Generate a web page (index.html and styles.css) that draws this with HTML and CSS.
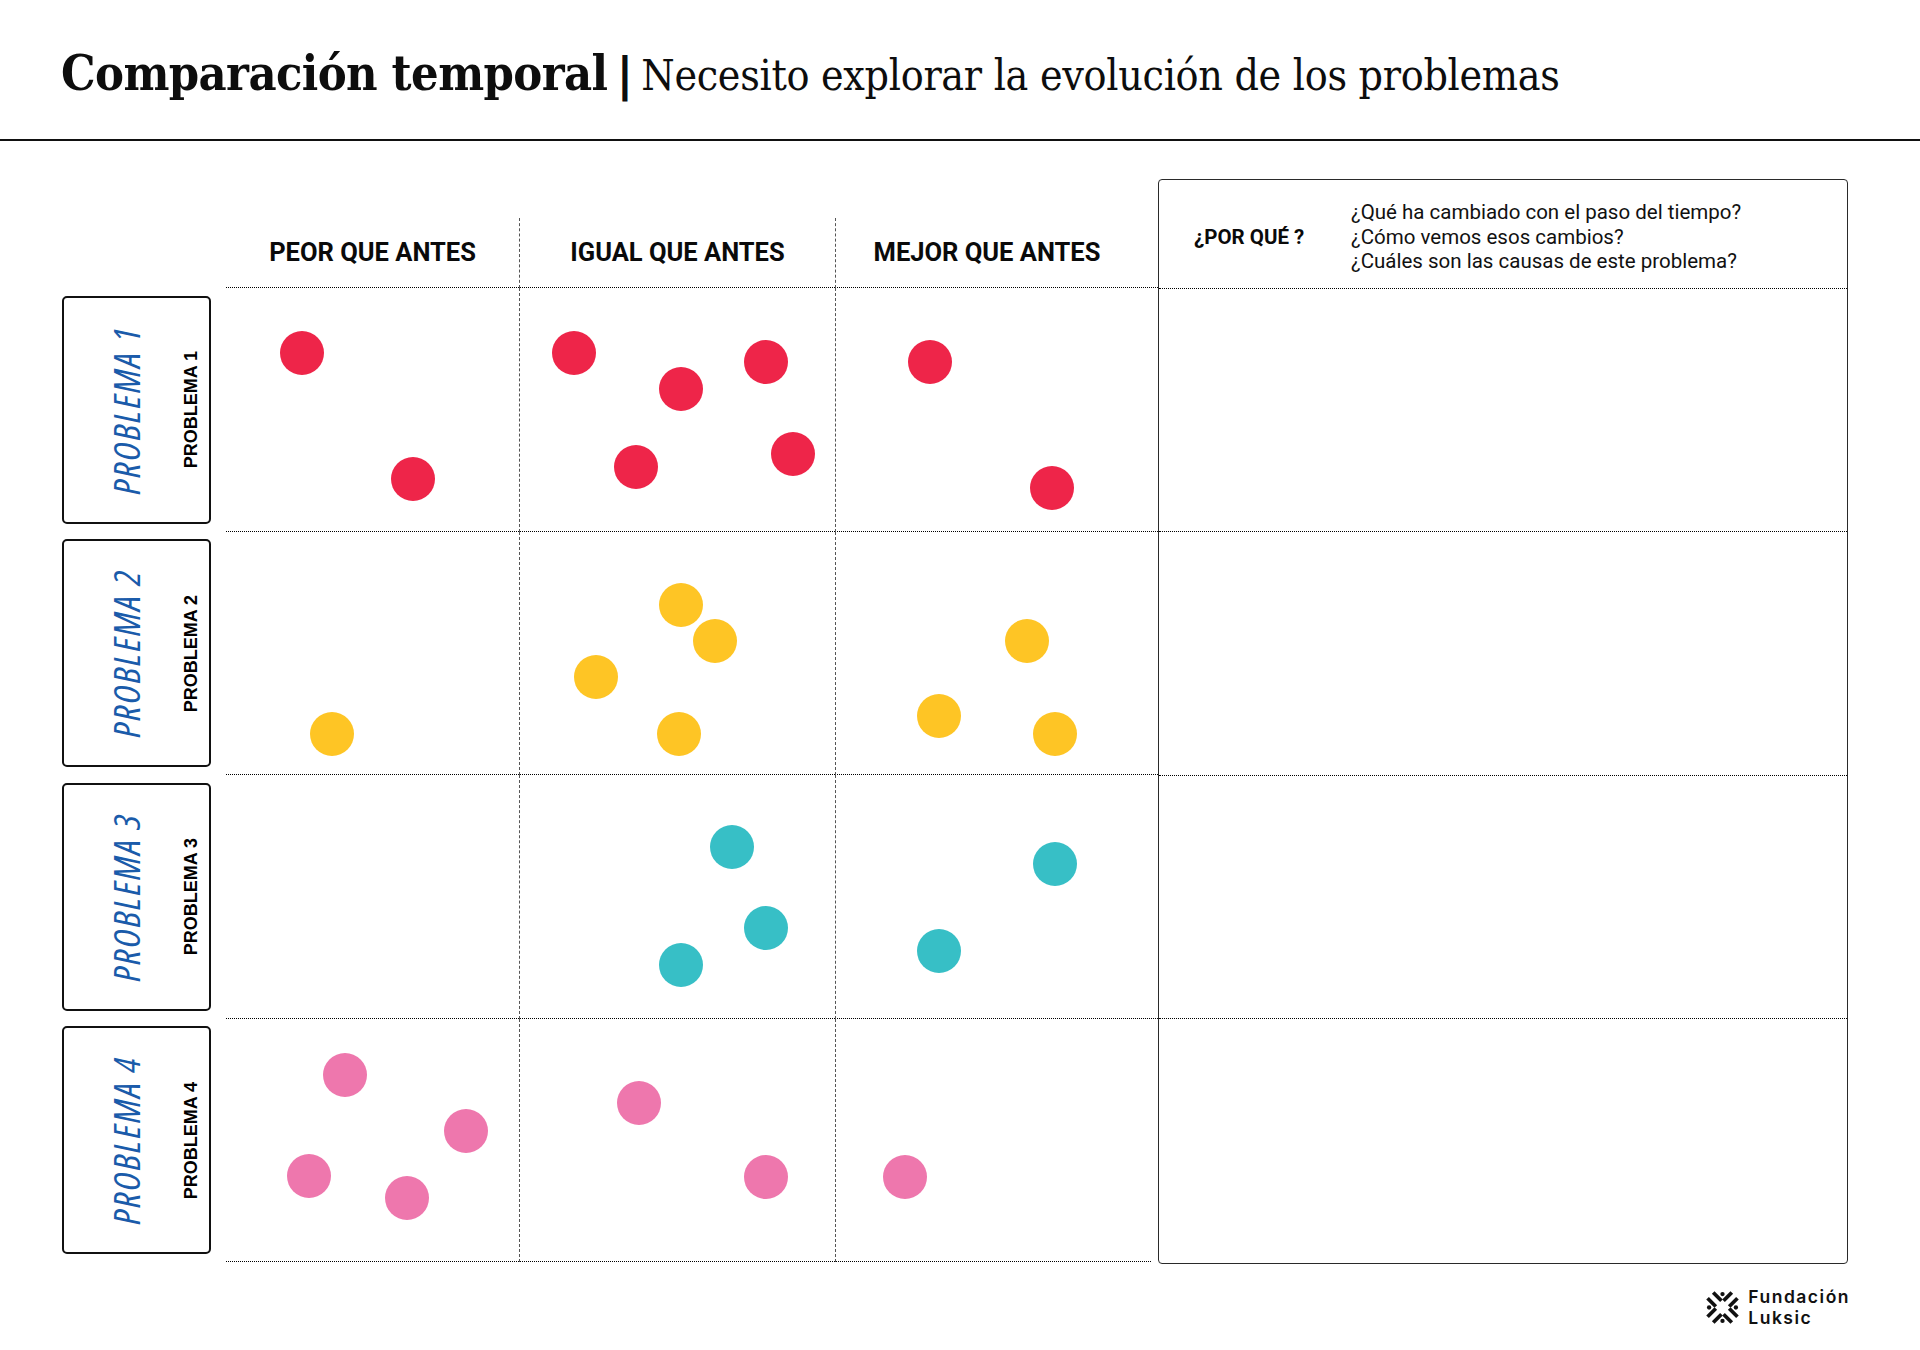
FILE: index.html
```html
<!DOCTYPE html>
<html lang="es">
<head>
<meta charset="utf-8">
<title>Comparación temporal</title>
<link rel="stylesheet" href="styles.css">
</head>
<body>
<header class="top">
  <h1 class="title"><span class="title-main">Comparación temporal</span><span class="title-sep">|</span><span class="title-sub">Necesito explorar la evolución de los problemas</span></h1>
</header>

<main class="board">
  <div class="labels">
    <div class="label-slot"><div class="label"><span class="hand">PROBLEMA 1</span><span class="print">PROBLEMA 1</span></div></div>
    <div class="label-slot"><div class="label"><span class="hand">PROBLEMA 2</span><span class="print">PROBLEMA 2</span></div></div>
    <div class="label-slot"><div class="label"><span class="hand">PROBLEMA 3</span><span class="print">PROBLEMA 3</span></div></div>
    <div class="label-slot"><div class="label"><span class="hand">PROBLEMA 4</span><span class="print">PROBLEMA 4</span></div></div>
  </div>

  <div class="matrix">
    <div class="cell head">PEOR QUE ANTES</div>
    <div class="cell head sep">IGUAL QUE ANTES</div>
    <div class="cell head sep head-last">MEJOR QUE ANTES</div>

    <div class="cell">
      <span class="dot red" style="left:54px;top:43px"></span>
      <span class="dot red" style="left:165px;top:169px"></span>
    </div>
    <div class="cell sep">
      <span class="dot red" style="left:32px;top:43px"></span>
      <span class="dot red" style="left:139px;top:79px"></span>
      <span class="dot red" style="left:224px;top:52px"></span>
      <span class="dot red" style="left:94px;top:157px"></span>
      <span class="dot red" style="left:251px;top:144px"></span>
    </div>
    <div class="cell sep">
      <span class="dot red" style="left:72px;top:52px"></span>
      <span class="dot red" style="left:194px;top:178px"></span>
    </div>

    <div class="cell">
      <span class="dot yellow" style="left:84px;top:180px"></span>
    </div>
    <div class="cell sep">
      <span class="dot yellow" style="left:139px;top:51px"></span>
      <span class="dot yellow" style="left:173px;top:87px"></span>
      <span class="dot yellow" style="left:54px;top:123px"></span>
      <span class="dot yellow" style="left:137px;top:180px"></span>
    </div>
    <div class="cell sep">
      <span class="dot yellow" style="left:169px;top:87px"></span>
      <span class="dot yellow" style="left:81px;top:162px"></span>
      <span class="dot yellow" style="left:197px;top:180px"></span>
    </div>

    <div class="cell"></div>
    <div class="cell sep">
      <span class="dot teal" style="left:190px;top:50px"></span>
      <span class="dot teal" style="left:224px;top:131px"></span>
      <span class="dot teal" style="left:139px;top:168px"></span>
    </div>
    <div class="cell sep">
      <span class="dot teal" style="left:197px;top:67px"></span>
      <span class="dot teal" style="left:81px;top:154px"></span>
    </div>

    <div class="cell">
      <span class="dot pink" style="left:97px;top:34px"></span>
      <span class="dot pink" style="left:218px;top:90px"></span>
      <span class="dot pink" style="left:61px;top:135px"></span>
      <span class="dot pink" style="left:159px;top:157px"></span>
    </div>
    <div class="cell sep">
      <span class="dot pink" style="left:97px;top:62px"></span>
      <span class="dot pink" style="left:224px;top:136px"></span>
    </div>
    <div class="cell sep last-end">
      <span class="dot pink" style="left:47px;top:136px"></span>
    </div>
  </div>

  <section class="why">
    <div class="why-head">
      <div class="why-title">¿POR QUÉ ?</div>
      <div class="why-questions">
        <p>¿Qué ha cambiado con el paso del tiempo?</p>
        <p>¿Cómo vemos esos cambios?</p>
        <p>¿Cuáles son las causas de este problema?</p>
      </div>
    </div>
    <div class="why-row"></div>
    <div class="why-row"></div>
    <div class="why-row"></div>
    <div class="why-row end"></div>
  </section>
</main>

<footer class="foot">
  <div class="logo">
    <svg class="logo-mark" viewBox="0 0 32 32" width="33" height="33" aria-hidden="true">
      <g stroke="#111" stroke-width="3.6" stroke-linecap="butt" fill="none">
        <line x1="1.5" y1="7" x2="9.5" y2="15"/>
        <line x1="7" y1="1.5" x2="15" y2="9.5"/>
        <line x1="30.5" y1="7" x2="22.5" y2="15"/>
        <line x1="25" y1="1.5" x2="17" y2="9.5"/>
        <line x1="1.5" y1="25" x2="9.5" y2="17"/>
        <line x1="7" y1="30.5" x2="15" y2="22.5"/>
        <line x1="30.5" y1="25" x2="22.5" y2="17"/>
        <line x1="25" y1="30.5" x2="17" y2="22.5"/>
      </g>
      <g fill="#111">
        <circle cx="16" cy="3" r="2.1"/>
        <circle cx="16" cy="29" r="2.1"/>
        <circle cx="3" cy="16" r="2.1"/>
        <circle cx="29" cy="16" r="2.1"/>
      </g>
    </svg>
    <div class="logo-text"><span class="logo-line">Fundación</span><span class="logo-line">Luksic</span></div>
  </div>
</footer>
</body>
</html>
```

FILE: styles.css
```css
* { box-sizing: border-box; }

html, body {
  margin: 0;
  padding: 0;
  background: #ffffff;
}

body {
  width: 1920px;
  height: 1350px;
  color: #111;
  font-family: "Roboto", "Liberation Sans", sans-serif;
  overflow: hidden;
}

/* ---------- header ---------- */
.top {
  height: 141px;
  border-bottom: 2px solid #111;
  padding: 49px 0 0 61px;
}

.title {
  margin: 0;
  display: flex;
  align-items: baseline;
  line-height: 1;
  font-weight: normal;
  color: #0d0d0d;
}

.title-main {
  font-family: "DejaVu Serif Condensed", "DejaVu Serif", serif;
  font-stretch: condensed;
  font-weight: 700;
  font-size: 48.3px;
  letter-spacing: -0.6px;
}

.title-sep {
  font-family: "DejaVu Sans", sans-serif;
  font-weight: 700;
  font-size: 46px;
  margin: 0 8px 0 9px;
}

.title-sub {
  font-family: "DejaVu Serif Condensed", "DejaVu Serif", serif;
  font-stretch: condensed;
  font-weight: 400;
  font-size: 42.5px;
  letter-spacing: -0.3px;
}

/* ---------- board ---------- */
.board {
  display: flex;
  align-items: flex-start;
  padding-left: 62px;
  margin-top: 38px;
}

.labels {
  width: 149px;
  margin-top: 109px;
  display: flex;
  flex-direction: column;
}

.label-slot {
  height: 243.5px;
  display: flex;
  align-items: center;
}

.label {
  width: 149px;
  height: 228px;
  border: 2px solid #111;
  border-radius: 5px;
  display: flex;
  align-items: center;
  padding-left: 43px;
}

.hand,
.print {
  writing-mode: vertical-rl;
  transform: rotate(180deg);
  white-space: nowrap;
  line-height: 1;
}

.hand {
  font-family: "Open Sans", "DejaVu Sans", sans-serif;
  font-style: italic;
  font-stretch: 75%;
  font-weight: 400;
  font-size: 37px;
  color: #1a5baa;
  letter-spacing: 2px;
}

.print {
  font-family: "Liberation Sans", Arial, sans-serif;
  font-weight: 700;
  font-size: 18px;
  color: #000;
  margin-left: 38px;
}

.matrix {
  width: 932px;
  margin-left: 15px;
  margin-top: 39px;
  display: grid;
  grid-template-columns: 293px 316px 323px;
  grid-template-rows: 70px repeat(4, 243.5px);
}

.cell {
  position: relative;
  border-bottom: 1px dotted #000;
}

.cell.sep {
  border-left: 1px dashed #555;
}

.cell.last-end {
  border-bottom: none;
}

.cell.last-end::after {
  content: "";
  position: absolute;
  left: 0;
  right: 7px;
  bottom: 0;
  border-bottom: 1px dotted #000;
}

.cell.head {
  display: flex;
  align-items: center;
  justify-content: center;
  font-family: "Roboto", "Liberation Sans", sans-serif;
  font-weight: 700;
  font-size: 25.5px;
  color: #0a0a0a;
  padding-bottom: 2px;
}

.cell.head.head-last {
  padding-right: 20px;
}

.dot {
  position: absolute;
  width: 44px;
  height: 44px;
  border-radius: 50%;
}

.red { background: #ee2549; }
.yellow { background: #fec525; }
.teal { background: #37bfc6; }
.pink { background: #ee77ad; }

/* ---------- why box ---------- */
.why {
  width: 690px;
  height: 1085px;
  border: 1.5px solid #2a2a2a;
  border-radius: 4px;
  display: flex;
  flex-direction: column;
}

.why-head {
  height: 108.5px;
  border-bottom: 1px dotted #000;
  display: flex;
  align-items: center;
  padding: 6px 0 0 35px;
}

.why-title {
  width: 157px;
  font-family: "Roboto", sans-serif;
  font-weight: 700;
  font-size: 20.5px;
  color: #0a0a0a;
}

.why-questions p {
  margin: 0;
  font-family: "Roboto", sans-serif;
  font-size: 20.5px;
  line-height: 24.5px;
  color: #111;
}

.why-row {
  height: 243.5px;
  border-bottom: 1px dotted #000;
}

.why-row.end {
  border-bottom: none;
  flex: 1;
}

/* ---------- footer ---------- */
.foot {
  display: flex;
  justify-content: flex-end;
  padding-right: 70px;
  margin-top: 22px;
}

.logo {
  display: flex;
  align-items: center;
  gap: 9px;
}

.logo-mark {
  display: block;
}

.logo-text {
  display: flex;
  flex-direction: column;
  font-family: "Inter", "Open Sans", sans-serif;
  font-weight: 600;
  font-size: 17.5px;
  line-height: 21px;
  letter-spacing: 1.5px;
  color: #111;
}

.logo-line {
  display: block;
}
```
